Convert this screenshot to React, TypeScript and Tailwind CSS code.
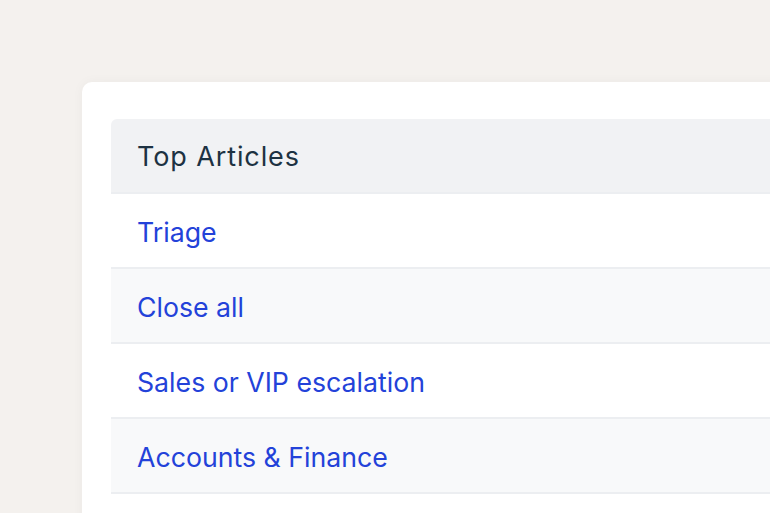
import React from "react";

const rows = ["Triage", "Close all", "Sales or VIP escalation", "Accounts & Finance"];

export default function App() {
  return (
    <div className="w-[770px] h-[513px] overflow-hidden bg-[#f4f1ee] pt-[82px] pl-[82px] font-['Inter',sans-serif]">
      <div className="w-[760px] h-[600px] bg-white rounded-[10px] shadow-[0_0_12px_rgba(0,0,0,0.04)] pt-[37px] pl-[29px]">
        <div className="flex flex-col">
          <div className="h-[75px] flex items-center pl-[26px] pt-[3px] bg-[#f1f2f4] rounded-t-[6px] border-b-2 border-[#eceef1] text-[27px] text-[#1d3242] tracking-[0.033em]">
            Top Articles
          </div>
          {rows.map((r, i) => (
            <div
              key={r}
              className={`h-[75px] flex items-center pl-[26px] pt-[3px] border-b-2 border-[#eceef1] text-[26.7px] text-[#2342d9] ${
                i % 2 === 1 ? "bg-[#f8f9fa]" : "bg-white"
              }`}
            >
              {r}
            </div>
          ))}
        </div>
      </div>
    </div>
  );
}
